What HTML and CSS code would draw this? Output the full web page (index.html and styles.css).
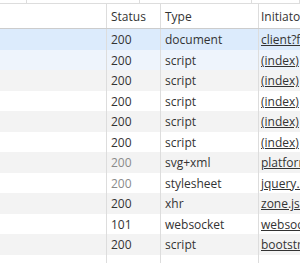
FILE: index.html
```html
<!DOCTYPE html>
<html lang="en">
<head>
    <meta charset="UTF-8">
    <title>Network</title>
    <link rel="stylesheet" href="styles.css">
</head>
<body>
    <div class="top-strip">
        <div class="strip-cell w1"></div>
        <div class="strip-cell w2"></div>
        <div class="strip-cell w3"></div>
        <div class="strip-cell"></div>
    </div>

    <div class="net-grid">
        <div class="row header">
            <div class="cell"></div>
            <div class="cell">Status</div>
            <div class="cell">Type</div>
            <div class="cell">Initiator</div>
        </div>

        <div class="row selected">
            <div class="cell"></div>
            <div class="cell">200</div>
            <div class="cell">document</div>
            <div class="cell"><a class="link">client?f</a></div>
        </div>
        <div class="row hover">
            <div class="cell"></div>
            <div class="cell">200</div>
            <div class="cell">script</div>
            <div class="cell"><a class="link">(index)</a></div>
        </div>
        <div class="row">
            <div class="cell"></div>
            <div class="cell">200</div>
            <div class="cell">script</div>
            <div class="cell"><a class="link">(index)</a></div>
        </div>
        <div class="row">
            <div class="cell"></div>
            <div class="cell">200</div>
            <div class="cell">script</div>
            <div class="cell"><a class="link">(index)</a></div>
        </div>
        <div class="row">
            <div class="cell"></div>
            <div class="cell">200</div>
            <div class="cell">script</div>
            <div class="cell"><a class="link">(index)</a></div>
        </div>
        <div class="row">
            <div class="cell"></div>
            <div class="cell">200</div>
            <div class="cell">script</div>
            <div class="cell"><a class="link">(index)</a></div>
        </div>
        <div class="row">
            <div class="cell"></div>
            <div class="cell cached">200</div>
            <div class="cell">svg+xml</div>
            <div class="cell"><a class="link">platform</a></div>
        </div>
        <div class="row">
            <div class="cell"></div>
            <div class="cell cached">200</div>
            <div class="cell">stylesheet</div>
            <div class="cell"><a class="link">jquery.min</a></div>
        </div>
        <div class="row">
            <div class="cell"></div>
            <div class="cell">200</div>
            <div class="cell">xhr</div>
            <div class="cell"><a class="link">zone.js:1</a></div>
        </div>
        <div class="row">
            <div class="cell"></div>
            <div class="cell">101</div>
            <div class="cell">websocket</div>
            <div class="cell"><a class="link">websocket</a></div>
        </div>
        <div class="row">
            <div class="cell"></div>
            <div class="cell">200</div>
            <div class="cell">script</div>
            <div class="cell"><a class="link">bootstrap</a></div>
        </div>
        <div class="row filler">
            <div class="cell"></div>
            <div class="cell"></div>
            <div class="cell"></div>
            <div class="cell"></div>
        </div>
    </div>
</body>
</html>
```

FILE: styles.css
```css
* {
    margin: 0;
    padding: 0;
    box-sizing: border-box;
}

body {
    font-family: 'Open Sans', 'Segoe UI', sans-serif;
    font-size: 12px;
    color: #333;
    background: #fff;
    overflow: hidden;
}

.top-strip {
    display: flex;
    height: 4px;
    border-bottom: 1px solid #ddd;
}

.strip-cell {
    flex: 1;
    border-right: 1px solid #ddd;
}

.strip-cell.w1 { flex: 0 0 27px; }
.strip-cell.w2 { flex: 0 0 113px; }
.strip-cell.w3 { flex: 0 0 112px; }

.net-grid {
    display: flex;
    flex-direction: column;
}

.row {
    display: grid;
    grid-template-columns: 107px 54px 98px 1fr;
    height: 20.5px;
}

.row.header {
    height: 25px;
    border-bottom: 1px solid #ccc;
}

.row:nth-child(even) {
    background: #f3f3f3;
}

.row.selected {
    background: #dcebfc;
}

.row.hover {
    background: #eef4fc;
}

.row.filler {
    height: 20px;
}

.cell {
    display: flex;
    align-items: center;
    padding: 1px 0 0 4px;
    border-right: 1px solid #ddd;
    white-space: nowrap;
    overflow: hidden;
}

.cell:last-child {
    border-right: none;
    padding-left: 2px;
}

.cached {
    color: #8a8a8a;
}

.link {
    color: #333;
    text-decoration: underline;
}
```
